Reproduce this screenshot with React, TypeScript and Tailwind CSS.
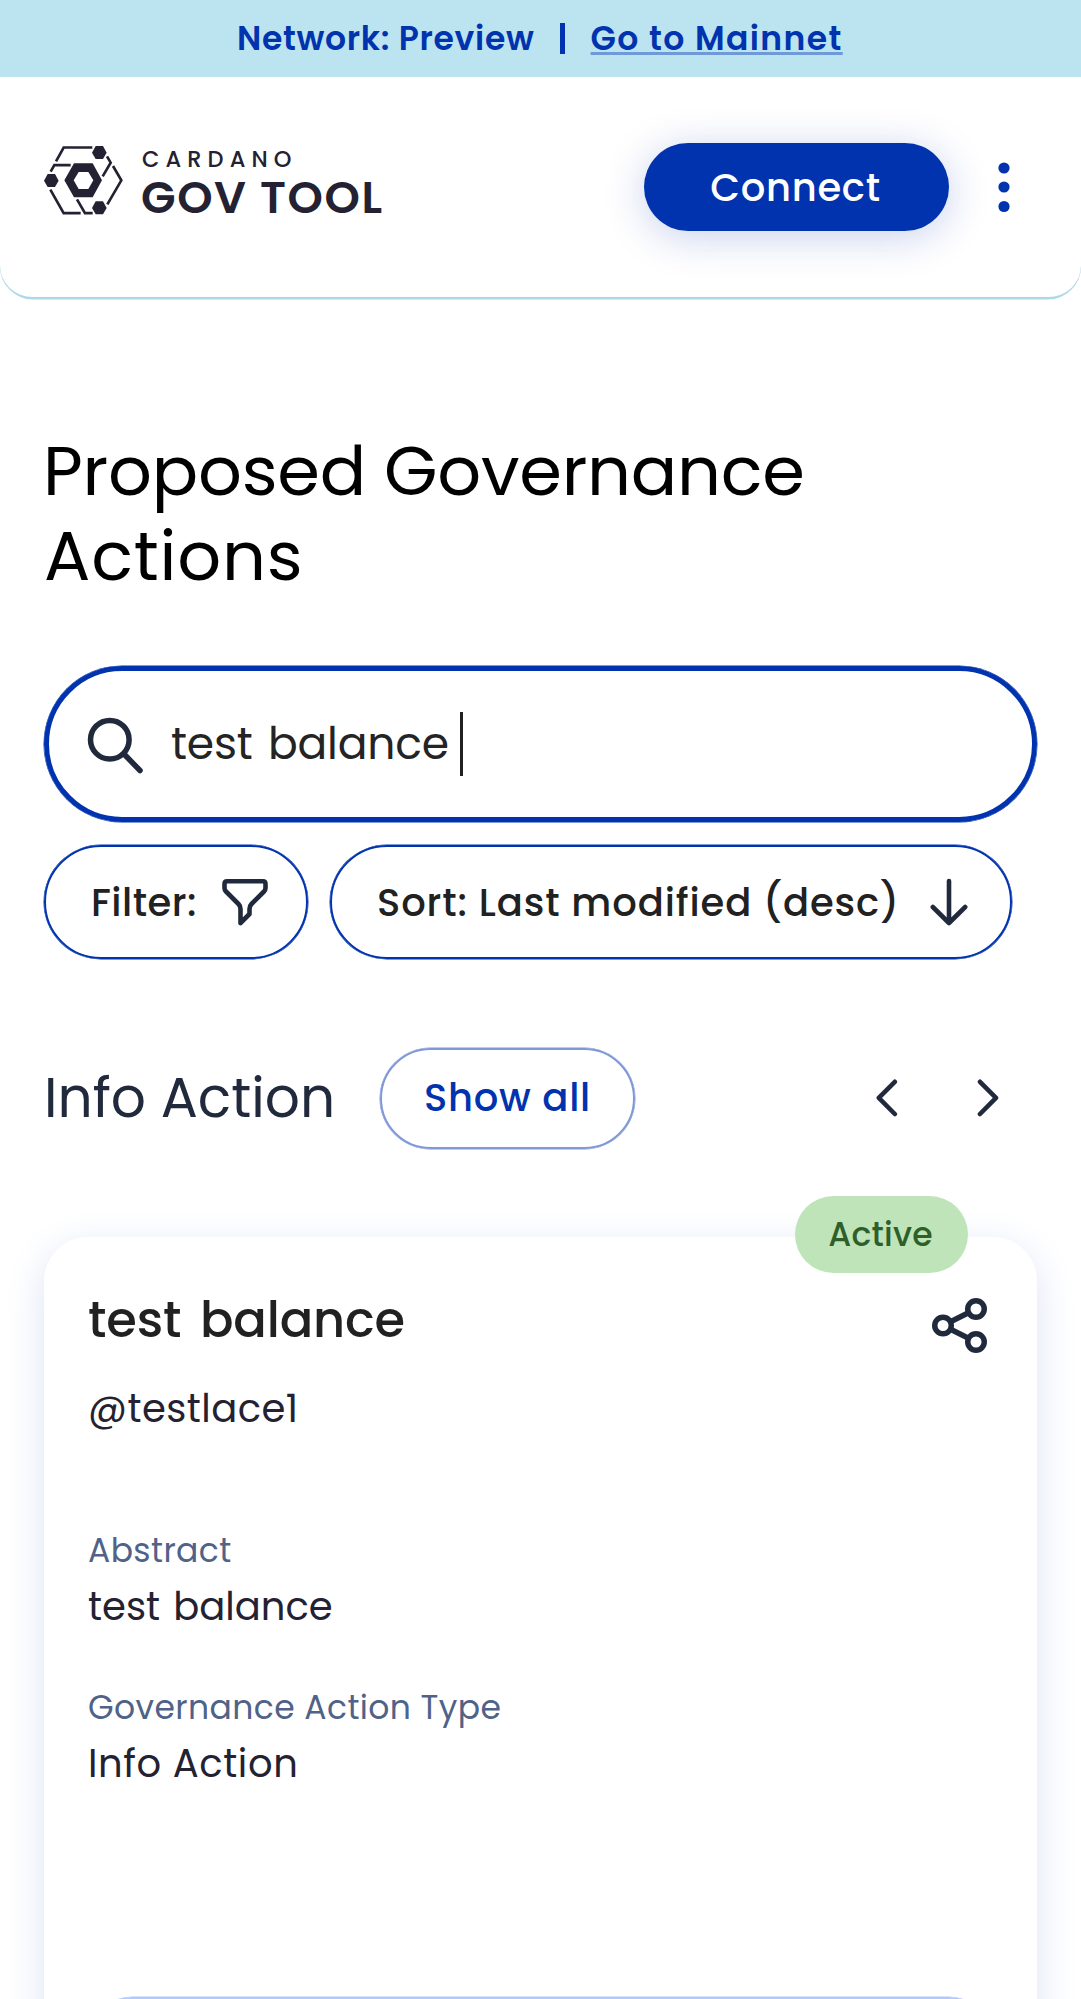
import type { ReactNode } from "react";

function LogoMark() {
  return (
    <svg width="79" height="69" viewBox="42 47 237 207" fill="none" className="block shrink-0">
      <g stroke="#242232" strokeWidth="8">
        <path d="M78 93 L101 51.500 H187" />
        <path d="M62 124 L73 104.500 H122" />
        <path d="M231 78 L242 97 L218 138" />
        <path d="M249 107 L274 150 L232 222" />
        <path d="M61 178 L101 248.500 H152" />
        <path d="M141 207 L165 248.500 H188" />
      </g>
      <g fill="#242232">
        <path d="M197 47 H219 L230 67 L219 86 H197 L186 67 Z" />
        <path d="M53 131 H75 L86 151 L75 170 H53 L42 151 Z" />
        <path d="M197 213 H219 L230 233 L219 252 H197 L186 233 Z" />
        <path
          fillRule="evenodd"
          d="M132 99 H188 L216 150 L188 201 H132 L103 150 Z M146 125 L131 150 L146 176 H175 L190 150 L175 125 Z"
        />
      </g>
    </svg>
  );
}

function Field({ label, value, className }: { label: string; value: ReactNode; className: string }) {
  return (
    <div className={className}>
      <div className="text-[33px] leading-[40px] tracking-[0.4px] text-[#506288]">{label}</div>
      <div className="mt-[13px] text-[38.5px] leading-[46px] text-[#242232]">{value}</div>
    </div>
  );
}

export default function App() {
  return (
    <div className="h-[1999px] w-full overflow-hidden bg-white font-[Poppins,Inter,sans-serif]">
      <div className="flex h-[77px] items-center bg-[#bce4f0] pl-[237px] text-[33px] font-semibold leading-[40px] text-[#0033ad] whitespace-nowrap">
        <span className="tracking-[0.7px]">Network: Preview</span>
        <span className="ml-[25px] h-[31px] w-[5px] bg-[#0033ad]" />
        <a className="ml-[26px] tracking-[1.4px] underline decoration-[#6e9bd8] decoration-[3px] underline-offset-[2px] [text-decoration-skip-ink:none]">
          Go to Mainnet
        </a>
      </div>

      <header className="flex h-[222px] items-start rounded-b-[33px] border-b-2 border-[#add8e6] bg-white pt-[66px] pr-[71px] pl-[44px] shadow-[0_0.5px_0_#add8e6]">
        <div className="flex pt-[3px] text-[#242232] whitespace-nowrap">
          <LogoMark />
          <div className="ml-[19px] flex flex-col gap-[6px] pt-[2px]">
            <span className="text-[22.5px] font-medium leading-[22px] tracking-[6.1px]">CARDANO</span>
            <span className="-ml-px text-[45px] font-semibold leading-[44px] tracking-[1.6px]">GOV TOOL</span>
          </div>
        </div>
        <button className="ml-auto h-[88px] w-[305px] rounded-full bg-[#0033ad] pt-[2px] pr-[2px] text-[38.5px] font-medium leading-[44px] tracking-[0.7px] text-white shadow-[0_6px_41px_rgba(0,51,173,0.22)]">
          Connect
        </button>
        <svg width="12" height="88" viewBox="0 0 12 88" fill="#0033ad" className="ml-[49px]">
          <circle cx="6" cy="25" r="5.600" />
          <circle cx="6" cy="44" r="5.600" />
          <circle cx="6" cy="63.500" r="5.600" />
        </svg>
      </header>

      <main className="px-[44px] pt-[130px]">
        <h1 className="text-[68.75px] font-normal leading-[85px] text-black whitespace-nowrap">
          <span className="-ml-px block tracking-[-0.25px]">Proposed Governance</span>
          <span className="block tracking-[0.8px]">Actions</span>
        </h1>

        <div className="mt-[67px] flex h-[156px] items-center rounded-full border-[5px] border-[#0033ad] pl-[38px] shadow-[0_0_0_0.5px_#0033ad]">
          <svg width="56" height="64" viewBox="0 0 56 64" fill="none" stroke="#212a3d" strokeWidth="5.500" strokeLinecap="round">
            <circle cx="22.800" cy="27.700" r="19.300" />
            <path d="M37 42 L53 58.500" />
          </svg>
          <span className="ml-[28px] text-[44px] leading-[54px] tracking-[-0.2px] text-[#242424] [word-spacing:4px]">test balance</span>
          <span className="ml-[11px] h-[64px] w-[3px] bg-[#212121]" />
        </div>

        <div className="mt-[23px] flex gap-[22px] text-[38.5px] font-medium leading-[44px] text-[#212121] whitespace-nowrap">
          <div className="flex h-[114px] w-[264px] items-center justify-between rounded-full border-2 border-[#0033ad] pr-[38px] pl-[45px] shadow-[0_0_0_0.5px_#0033ad]">
            <span className="pt-[2px] tracking-[0.5px]">Filter:</span>
            <svg width="46" height="48" viewBox="0 0 46 48" fill="none" stroke="#212a3d" strokeWidth="4.600" strokeLinejoin="round">
              <path d="M5 3.300 H41 Q43.500 3.300 43.500 6 V10 Q43.500 12 42 13.500 L29.500 26 Q27.500 28 27.500 31 V36 L18.500 45 V31 Q18.500 28 16.500 26 L4 13.500 Q2.500 12 2.500 10 V6 Q2.500 3.300 5 3.300 Z" />
            </svg>
          </div>
          <div className="flex h-[114px] w-[682px] items-center justify-between rounded-full border-2 border-[#0033ad] pr-[42px] pl-[45px] shadow-[0_0_0_0.5px_#0033ad]">
            <span className="pt-[2px] tracking-[0.9px]">Sort: Last modified (desc)</span>
            <svg width="38" height="48" viewBox="0 0 38 48" fill="none" stroke="#212a3d" strokeWidth="4.600" strokeLinecap="round" strokeLinejoin="round">
              <path d="M19 3 V45 M2.800 29 L19 45 L35.200 29" />
            </svg>
          </div>
        </div>

        <div className="mt-[89px] flex h-[101px] items-center pr-[38px] whitespace-nowrap">
          <h2 className="w-[336px] pb-[2px] text-[55px] font-normal leading-[64px] text-[#212a3d]">Info Action</h2>
          <button className="h-[101px] w-[255px] rounded-full border-2 border-[#8099d6] pb-[2px] text-[38.5px] font-medium leading-[44px] tracking-[0.75px] text-[#0033ad] shadow-[0_0_0_0.5px_#8099d6]">
            Show all
          </button>
          <svg width="22" height="38" viewBox="0 0 22 38" fill="none" stroke="#212a3d" strokeWidth="4.600" strokeLinecap="round" strokeLinejoin="round" className="mb-[2px] ml-auto">
            <path d="M18.800 2.800 L2.800 18.800 L18.800 35" />
          </svg>
          <svg width="22" height="38" viewBox="0 0 22 38" fill="none" stroke="#212a3d" strokeWidth="4.600" strokeLinecap="round" strokeLinejoin="round" className="mb-[2px] ml-[79px]">
            <path d="M3 2.800 L19 18.800 L3 35" />
          </svg>
        </div>

        <article className="relative mt-[88px] h-[900px] rounded-[44px] bg-white px-[44px] pt-[55px] shadow-[0_11px_41px_#dde3f5]">
          <span className="absolute -top-[41px] left-[751px] flex h-[77px] w-[173px] items-center justify-center rounded-full bg-[#c0e4ba] pr-[2px] text-[33px] font-medium leading-[40px] tracking-[0.25px] text-[#2f5f28]">
            Active
          </span>
          <div className="flex justify-between">
            <div className="whitespace-nowrap">
              <h3 className="text-[49.5px] font-medium leading-[56px] tracking-[-0.15px] text-[#212121] [word-spacing:6px]">test balance</h3>
              <div className="mt-[38px] text-[38.5px] leading-[46px] tracking-[0.45px] text-[#242232]">@testlace1</div>
            </div>
            <svg width="56" height="56" viewBox="0 0 56 56" fill="none" stroke="#212a3d" strokeWidth="5.500" className="mt-[5px] mr-[6px]">
              <circle cx="45" cy="12" r="8.250" />
              <circle cx="12" cy="28.500" r="8.250" />
              <circle cx="45" cy="45" r="8.250" />
              <path d="M19.500 24.800 L37.500 15.800 M19.500 32.200 L37.500 41.200" />
            </svg>
          </div>
          <Field
            className="mt-[99px]"
            label="Abstract"
            value={<span className="[word-spacing:3px]">test balance</span>}
          />
          <Field
            className="mt-[58px]"
            label="Governance Action Type"
            value={<span className="tracking-[0.6px]">Info Action</span>}
          />
          <div className="mt-[210px] h-[88px] rounded-full border-[3px] border-[#b3c9fa] shadow-[0_0_0_0.5px_#b3c9fa]" />
        </article>
      </main>
    </div>
  );
}
